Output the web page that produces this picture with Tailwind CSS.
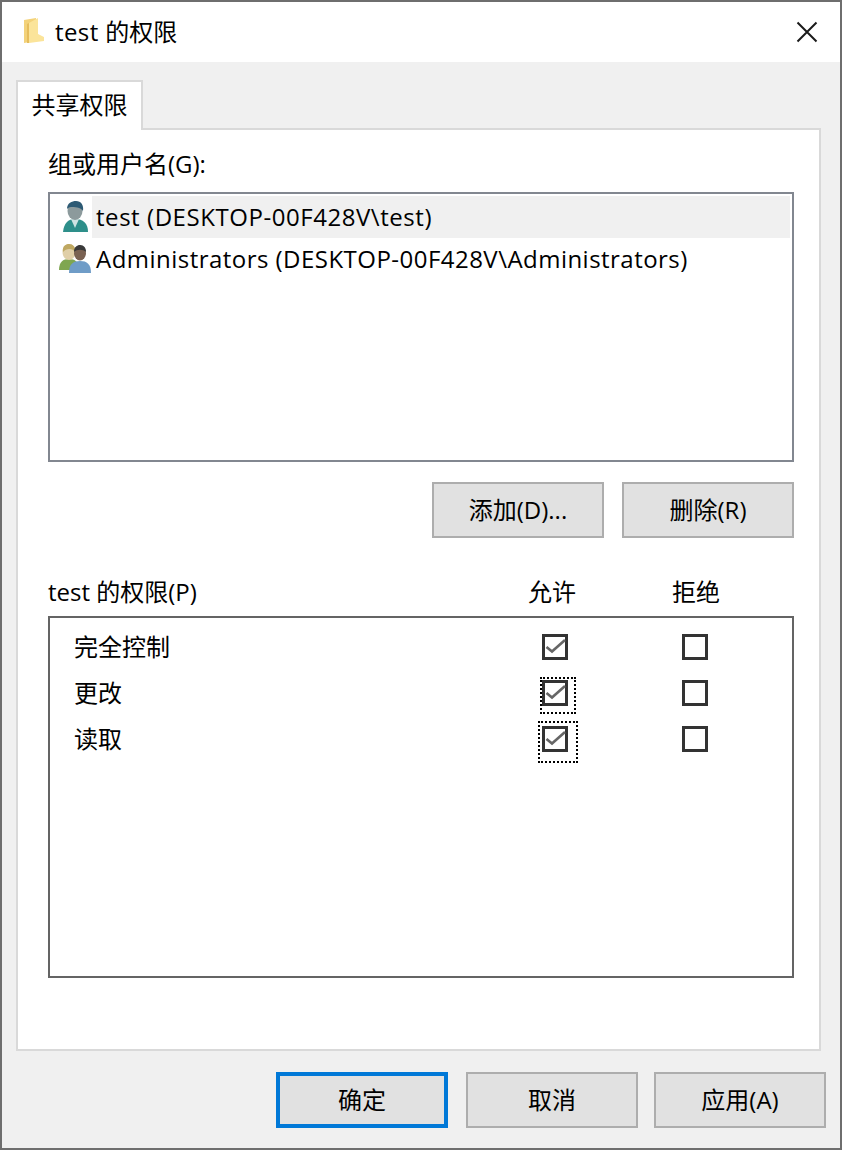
<!DOCTYPE html>
<html lang="zh-CN">
  <head>
    <meta charset="UTF-8" />
    <title>test 的权限</title>
    <script src="https://cdn.jsdelivr.net/npm/@tailwindcss/browser@4"></script>
  </head>
  <body class="bg-[#f0f0f0] text-black font-['Open_Sans','Noto_Sans_CJK_SC',sans-serif]">
    <div class="w-[842px] h-[1150px] flex flex-col border-2 border-[#6e6e6e] bg-[#f0f0f0] overflow-hidden">
      <!-- title bar -->
      <div class="h-[60px] shrink-0 bg-white flex items-center pl-[22px] pr-[14px]">
        <svg class="w-[20px] h-[28px] -mt-[2px]" viewBox="0 0 20 28">
          <path d="M0 3 L12 1 L12 24 L0 26 Z" fill="#f3d27a" />
          <path d="M5 6 L14 1 L14 17 L20 20 L20 24 L5 26 Z" fill="#fbe49a" />
          <path d="M5 6 L5 26 L3 26 L3 7 Z" fill="#e6bd5c" />
        </svg>
        <span class="ml-[11px] text-[24px] leading-none"><span class="tracking-[0.4px]">test </span>的权限</span>
        <svg class="ml-auto w-[22px] h-[22px] mr-[8px]" viewBox="0 0 22 22">
          <path d="M1.5 1.5 L20.5 20.5 M20.5 1.5 L1.5 20.5" stroke="#1a1a1a" stroke-width="2" fill="none" />
        </svg>
      </div>

      <div class="flex-1 flex flex-col pl-[14px] pr-[14px] pt-[18px]">
        <!-- tab -->
        <div class="relative z-10 w-[127px] h-[50px] -mb-[2px] bg-white border-2 border-b-0 border-[#d9d9d9] flex items-center justify-center text-[24px] leading-none pb-[2px]">
          共享权限
        </div>

        <!-- panel -->
        <div class="w-[805px] h-[923px] mr-[5px] bg-white border-2 border-[#d9d9d9] px-[30px] pt-[20px] flex flex-col">
          <div class="text-[24px] leading-[28px]">组或用户名(G):</div>
          <div class="mt-[14px] w-[746px] h-[270px] border-2 border-[#828790] pt-[2px] pr-[2px]">
            <div class="flex items-center h-[42px] pl-[13px]">
              <svg class="w-[26px] h-[32px] shrink-0" viewBox="0 0 26 32">
                <path d="M0 31 C1 22 5 18 12 18 C20 18 25 22 25 31 Z" fill="#2e8f8a" />
                <path d="M8 18 L12 27 L16 18 Z" fill="#cfe3e2" />
                <ellipse cx="12" cy="10" rx="7.5" ry="9" fill="#8c9a9c" />
                <path d="M4 8 C4 2 9 0 13 0 C18 0 21 4 20 10 C18 6 11 6 8 6 C6 6 5 7 4 8 Z" fill="#2d5a74" />
              </svg>
              <div class="flex-1 h-full ml-[3px] bg-[#f0f0f0] flex items-center text-[24px] tracking-[0.55px] leading-none pl-[4px]">test (DESKTOP-00F428V\test)</div>
            </div>
            <div class="flex items-center h-[42px] pl-[9px]">
              <svg class="w-[33px] h-[30px] shrink-0" viewBox="0 0 33 30">
                <path d="M0 26 C0 18 4 15 10 15 C16 15 20 18 20 26 Z" fill="#7fa650" />
                <ellipse cx="10" cy="8" rx="6.5" ry="8" fill="#e0cfa8" />
                <path d="M4 8 C3 2 7 0 10 0 C14 0 17 3 16 8 C14 4 7 4 4 8 Z" fill="#bfa862" />
                <path d="M10 29 C10 20 14 17 21 17 C28 17 32 20 32 29 Z" fill="#6f9cc7" />
                <ellipse cx="21" cy="9" rx="6" ry="7.5" fill="#7a6252" />
                <path d="M15 8 C15 3 18 1 21 1 C25 1 27 4 27 8 C24 5 18 5 15 8 Z" fill="#3a3a3a" />
              </svg>
              <span class="ml-[4px] text-[24px] tracking-[0.47px] leading-none">Administrators (DESKTOP-00F428V\Administrators)</span>
            </div>
          </div>

          <div class="mt-[20px] w-[746px] flex justify-end gap-[18px]">
            <button class="w-[172px] h-[56px] bg-[#e1e1e1] border-2 border-[#adadad] text-[24px] leading-none">添加(D)...</button>
            <button class="w-[172px] h-[56px] bg-[#e1e1e1] border-2 border-[#adadad] text-[24px] leading-none">删除(R)</button>
          </div>

          <div class="mt-[40px] w-[746px] h-[28px] grid grid-cols-[480px_144px_auto] items-center text-[24px] leading-none">
            <span>test 的权限(P)</span>
            <span>允许</span>
            <span>拒绝</span>
          </div>

          <div class="mt-[10px] w-[746px] h-[362px] border-2 border-[#646464] pt-[6px] pl-[24px] text-[24px] leading-none">
            <div class="grid grid-cols-[468px_26px_114px_26px] auto-rows-[46px] items-center">
              <span>完全控制</span>
              <span class="relative block w-[26px] h-[26px] border-[3px] border-[#333]">
                <svg class="absolute -left-[3px] -top-[3px] w-[26px] h-[26px]" viewBox="0 0 26 26"><path d="M4.5 13 L10 17.5 L23 6" stroke="#666" stroke-width="2.6" fill="none" /></svg>
              </span>
              <span class="col-start-4 block w-[26px] h-[26px] border-[3px] border-[#333]"></span>

              <span>更改</span>
              <span class="relative block w-[26px] h-[26px] border-[3px] border-[#333]">
                <svg class="absolute -left-[3px] -top-[3px] w-[26px] h-[26px]" viewBox="0 0 26 26"><path d="M4.5 13 L10 17.5 L23 6" stroke="#666" stroke-width="2.6" fill="none" /></svg>
                <span class="absolute -left-[5px] -top-[6px] w-[36px] h-[37px] border-2 border-dotted border-black"></span>
              </span>
              <span class="col-start-4 block w-[26px] h-[26px] border-[3px] border-[#333]"></span>

              <span>读取</span>
              <span class="relative block w-[26px] h-[26px] border-[3px] border-[#333]">
                <svg class="absolute -left-[3px] -top-[3px] w-[26px] h-[26px]" viewBox="0 0 26 26"><path d="M4.5 13 L10 17.5 L23 6" stroke="#666" stroke-width="2.6" fill="none" /></svg>
                <span class="absolute -left-[7px] -top-[8px] w-[40px] h-[42px] border-2 border-dotted border-black"></span>
              </span>
              <span class="col-start-4 block w-[26px] h-[26px] border-[3px] border-[#333]"></span>
            </div>
          </div>
        </div>

        <!-- footer buttons -->
        <div class="mt-[21px] flex justify-end gap-[16px]">
          <button class="w-[172px] h-[56px] mr-[2px] bg-[#e1e1e1] border-4 border-[#0078d7] text-[24px] leading-none">确定</button>
          <button class="w-[172px] h-[56px] bg-[#e1e1e1] border-2 border-[#adadad] text-[24px] leading-none">取消</button>
          <button class="w-[172px] h-[56px] bg-[#e1e1e1] border-2 border-[#adadad] text-[24px] leading-none">应用(A)</button>
        </div>
      </div>
    </div>
  </body>
</html>
